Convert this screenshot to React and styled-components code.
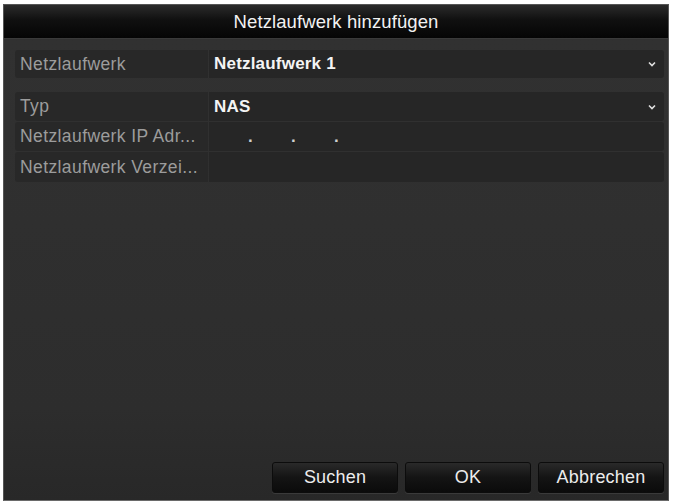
import React from 'react';
import styled, { createGlobalStyle } from 'styled-components';

const GlobalStyle = createGlobalStyle`
    html, body {
        margin: 0;
        padding: 0;
        background: #ffffff;
    }
    body {
        font-family: 'Liberation Sans', Arial, sans-serif;
    }
`;

const Page = styled.div`
    width: 673px;
    height: 503px;
    padding: 4px 4px 2px 3px;
    box-sizing: border-box;
    display: flex;
`;

const Dialog = styled.div`
    flex: 1;
    display: flex;
    flex-direction: column;
    background: #2f2f2f;
    border: 1px solid #555;
    border-bottom-color: #6a6a6a;
`;

const TitleBar = styled.div`
    height: 33px;
    flex-shrink: 0;
    display: flex;
    align-items: center;
    justify-content: center;
    background: linear-gradient(#2b2b2b, #101010 45%, #050505);
    color: #f2f2f2;
    font-size: 18.5px;
    letter-spacing: 0.1px;
    border-bottom: 1px solid #3a3a3a;
`;

const Body = styled.div`
    flex: 1;
    display: flex;
    flex-direction: column;
    padding: 11px 4px 7px 11px;
    background: linear-gradient(#313131, #2d2d2d 80%, #282828);
`;

const Group = styled.div`
    display: flex;
    flex-direction: column;
    gap: 1px;
    margin-bottom: ${(p) => p.$gap || '0'};
`;

const Row = styled.div`
    display: flex;
    height: ${(p) => p.$height || '29px'};
    gap: 1px;
`;

const Label = styled.div`
    width: 193px;
    flex-shrink: 0;
    display: flex;
    align-items: center;
    padding-left: 5px;
    box-sizing: border-box;
    background: #282828;
    color: #9c9c9c;
    font-size: 17.5px;
    letter-spacing: 0.4px;
    border-radius: 3px 0 0 3px;
    white-space: nowrap;
    overflow: hidden;
`;

const Value = styled.div`
    flex: 1;
    display: flex;
    align-items: center;
    padding: 0 6px 0 5px;
    background: #262626;
    color: #f4f4f4;
    font-size: 17px;
    font-weight: bold;
    letter-spacing: 0.2px;
    border-radius: 0 3px 3px 0;
`;

const ValueText = styled.span`
    flex: 1;
`;

const Chevron = styled.svg`
    width: 8px;
    height: 6px;
    margin-right: 2px;
`;

const IpDots = styled.span`
    display: flex;
    gap: 38px;
    padding-left: 34px;
    color: #d0d0d0;
    font-weight: bold;
`;

const Spacer = styled.div`
    flex: 1;
`;

const Footer = styled.div`
    display: flex;
    justify-content: flex-end;
    gap: 7px;
`;

const Button = styled.button`
    width: 126px;
    height: 31px;
    border: 1px solid #0c0c0c;
    border-radius: 3px;
    background: linear-gradient(#2a2a2a, #141414 50%, #0b0b0b);
    color: #ececec;
    font-family: 'Liberation Sans', Arial, sans-serif;
    font-size: 18px;
    letter-spacing: 0.2px;
    padding: 0;
    box-shadow: 0 1px 0 #3a3a3a;
    cursor: pointer;
`;

function Dropdown() {
    return (
        <Chevron viewBox="0 0 8 6">
            <path d="M1 1.5 L4 4.5 L7 1.5" fill="none" stroke="#e0e0e0" strokeWidth="1.6" />
        </Chevron>
    );
}

export default function App() {
    return (
        <>
            <GlobalStyle />
            <Page>
                <Dialog>
                    <TitleBar>Netzlaufwerk hinzufügen</TitleBar>
                    <Body>
                        <Group $gap="14px">
                            <Row $height="28px">
                                <Label>Netzlaufwerk</Label>
                                <Value>
                                    <ValueText>Netzlaufwerk 1</ValueText>
                                    <Dropdown />
                                </Value>
                            </Row>
                        </Group>
                        <Group>
                            <Row>
                                <Label>Typ</Label>
                                <Value>
                                    <ValueText>NAS</ValueText>
                                    <Dropdown />
                                </Value>
                            </Row>
                            <Row>
                                <Label>Netzlaufwerk IP Adr...</Label>
                                <Value>
                                    <IpDots>
                                        <span>.</span>
                                        <span>.</span>
                                        <span>.</span>
                                    </IpDots>
                                </Value>
                            </Row>
                            <Row $height="30px">
                                <Label>Netzlaufwerk Verzei...</Label>
                                <Value />
                            </Row>
                        </Group>
                        <Spacer />
                        <Footer>
                            <Button>Suchen</Button>
                            <Button>OK</Button>
                            <Button>Abbrechen</Button>
                        </Footer>
                    </Body>
                </Dialog>
            </Page>
        </>
    );
}
